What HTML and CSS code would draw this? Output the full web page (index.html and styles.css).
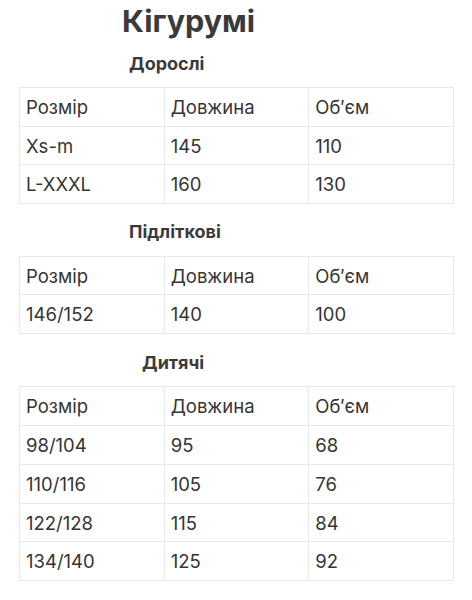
FILE: index.html
```html
<!DOCTYPE html>
<html lang="uk">
<head>
<meta charset="utf-8">
<title>Кігурумі</title>
<link rel="stylesheet" href="styles.css">
</head>
<body>
<div class="page">
  <h1 class="title">Кігурумі</h1>

  <h2 class="sec sec-adult">Дорослі</h2>
  <table class="sizes">
    <tr><td>Розмір</td><td>Довжина</td><td>Об′єм</td></tr>
    <tr><td>Xs-m</td><td>145</td><td>110</td></tr>
    <tr><td>L-XXXL</td><td>160</td><td>130</td></tr>
  </table>

  <h2 class="sec sec-teen">Підліткові</h2>
  <table class="sizes">
    <tr><td>Розмір</td><td>Довжина</td><td>Об′єм</td></tr>
    <tr><td>146/152</td><td>140</td><td>100</td></tr>
  </table>

  <h2 class="sec sec-kids">Дитячі</h2>
  <table class="sizes">
    <tr><td>Розмір</td><td>Довжина</td><td>Об′єм</td></tr>
    <tr><td>98/104</td><td>95</td><td>68</td></tr>
    <tr><td>110/116</td><td>105</td><td>76</td></tr>
    <tr><td>122/128</td><td>115</td><td>84</td></tr>
    <tr><td>134/140</td><td>125</td><td>92</td></tr>
  </table>
</div>
</body>
</html>
```
FILE: styles.css
```css
html, body {
  margin: 0;
  padding: 0;
  background: #ffffff;
}
body {
  font-family: Inter, "Liberation Sans", sans-serif;
  color: #333333;
}
.page {
  padding: 3px 19px 0 19px;
}
.title {
  margin: 0 0 13.5px 103px;
  font-size: 30.5px;
  line-height: 36px;
  font-weight: 700;
  color: #3a3a3a;
}
.sec {
  margin: 0 0 12.5px 0;
  font-size: 18px;
  line-height: 22px;
  font-weight: 700;
  color: #3a3a3a;
}
.sec-adult { margin-left: 110px; }
.sec-teen { margin-left: 110px; margin-top: 17px; }
.sec-kids { margin-left: 123px; margin-top: 18px; }
.sizes {
  width: 435px;
  border-collapse: collapse;
  table-layout: fixed;
  font-size: 18.5px;
  line-height: 22px;
}
.sizes td {
  border: 1px solid #e8e8e8;
  padding: 8px 6px 7.7px 6px;
  color: #353535;
  white-space: nowrap;
}
```
